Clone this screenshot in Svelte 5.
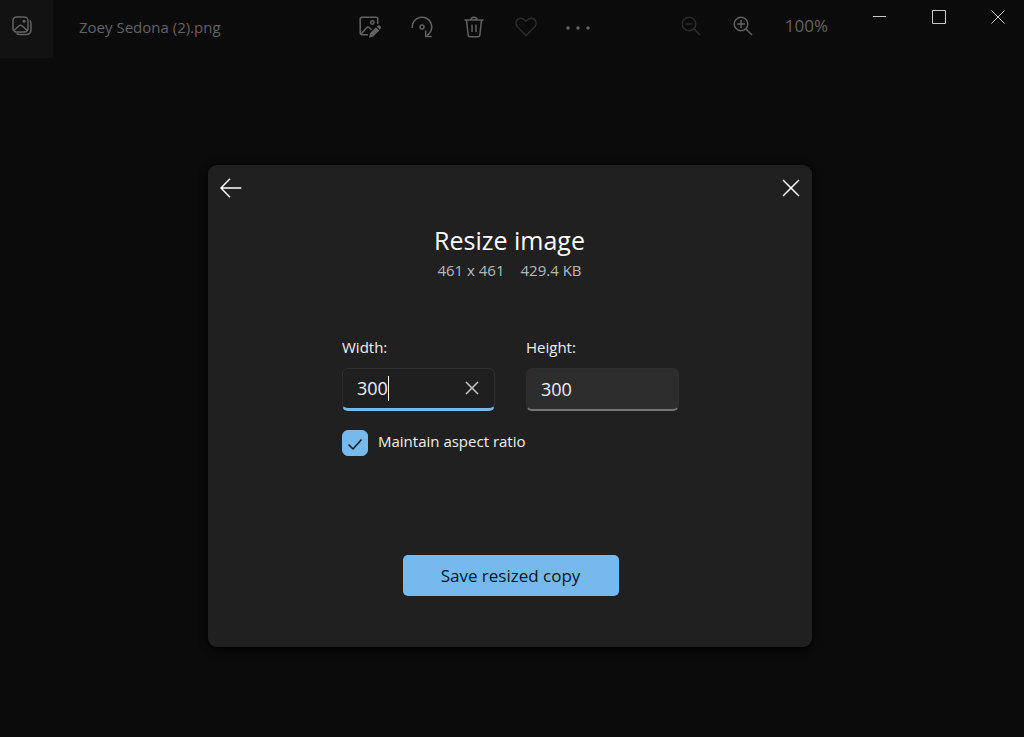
<script lang="ts">
  const fileName = "Zoey Sedona (2).png";
  const original = { width: 461, height: 461, size: "429.4 KB" };

  let width = $state("300");
  let height = $state("300");
  let keepRatio = $state(true);

  const ratio = original.width / original.height;

  function onWidthInput() {
    if (keepRatio && width) height = String(Math.round(Number(width) / ratio));
  }

  function onHeightInput() {
    if (keepRatio && height) width = String(Math.round(Number(height) * ratio));
  }
</script>

<div class="window">
  <header class="title-bar">
    <button class="gallery" aria-label="All photos">
      <svg width="22" height="22" viewBox="0 0 22 22">
        <rect x="2" y="2" width="15" height="15" rx="3.5" />
        <path d="M3 15.5 L8 10.8 Q9.5 9.6 11 10.8 L16 15.5" />
        <path d="M18.8 5.5 Q20 6.5 20 8.5 V14.5 Q20 19.5 15 19.5 H9 Q6.5 19.5 5.5 18.5" />
        <circle class="solid" cx="13" cy="6.3" r="1.5" />
      </svg>
    </button>
    <span class="file-name">{fileName}</span>

    <nav class="tools">
      <button aria-label="Edit image">
        <svg width="22" height="22" viewBox="0 0 22 22">
          <path d="M9 18.7 H3 Q1.2 18.7 1.2 17 V3 Q1.2 1.2 3 1.2 H17 Q18.8 1.2 18.8 3 V8" />
          <path d="M2 18 L8 11.5 Q9 10.7 10 11.5 L12.5 13.8" />
          <circle cx="13.3" cy="6.5" r="1.7" />
          <path class="solid" d="M10 21.8 L11 17.2 L17 11.2 L20.3 14.5 L14.2 20.6 Z M17.8 10.5 L19 9.5 Q20.2 8.8 21.4 10.1 Q22.6 11.7 21.6 12.7 L20.8 13.6 Z" />
        </svg>
      </button>
      <button aria-label="Rotate">
        <svg width="22" height="22" viewBox="0 0 22 22">
          <path d="M1.2 12 A9.8 9.8 0 1 1 15.8 19.5" />
          <path d="M14.7 14.5 V20.5 H20.7" />
          <circle cx="11" cy="11" r="2" />
        </svg>
      </button>
      <button aria-label="Delete">
        <svg width="22" height="22" viewBox="0 0 22 22">
          <path d="M1.5 4 H20.5 M8 4 Q8 1.2 11 1.2 Q14 1.2 14 4" />
          <path d="M3.5 4 L5.2 19.3 Q5.4 20.8 7 20.8 H15 Q16.6 20.8 16.8 19.3 L18.5 4" />
          <path d="M9 8.5 V16 M13 8.5 V16" />
        </svg>
      </button>
      <button class="faded" aria-label="Add to favorites">
        <svg width="22" height="22" viewBox="0 0 22 22">
          <path d="M11 19.5 L2.5 11 C-0.5 7.5 1.2 2.2 5.8 2.2 C8.4 2.2 9.6 3.6 11 5.2 C12.4 3.6 13.6 2.2 16.2 2.2 C20.8 2.2 22.5 7.5 19.5 11 Z" />
        </svg>
      </button>
      <button aria-label="See more">
        <svg width="26" height="22" viewBox="0 0 26 22">
          <circle class="solid" cx="3" cy="12" r="1.8" />
          <circle class="solid" cx="13" cy="12" r="1.8" />
          <circle class="solid" cx="23" cy="12" r="1.8" />
        </svg>
      </button>
    </nav>

    <div class="zoom">
      <button class="faded" aria-label="Zoom out">
        <svg width="20" height="20" viewBox="0 0 20 20">
          <circle cx="8" cy="8" r="6.8" />
          <path d="M13 13 L19 19 M4.5 8 H11.5" />
        </svg>
      </button>
      <button aria-label="Zoom in">
        <svg width="20" height="20" viewBox="0 0 20 20">
          <circle cx="8" cy="8" r="6.8" />
          <path d="M13 13 L19 19 M4 8 H12 M8 4 V12" />
        </svg>
      </button>
      <span class="zoom-level">100%</span>
    </div>

    <div class="window-controls">
      <button aria-label="Minimize">
        <svg width="14" height="14" viewBox="0 0 14 14"><path d="M0 6.5 H13" /></svg>
      </button>
      <button aria-label="Maximize">
        <svg width="14" height="14" viewBox="0 0 14 14"><path d="M0.5 0.5 H13.5 V13.5 H0.5 Z" /></svg>
      </button>
      <button aria-label="Close window">
        <svg width="14" height="14" viewBox="0 0 14 14"><path d="M0.5 0.5 L13.5 13.5 M13.5 0.5 L0.5 13.5" /></svg>
      </button>
    </div>
  </header>

  <main class="stage">
    <div class="dialog" role="dialog" aria-labelledby="dialog-title">
      <div class="dialog-nav">
        <button aria-label="Back">
          <svg width="22" height="20" viewBox="0 0 22 20">
            <path d="M21.3 10 H1.2 M10 0.8 L1 10 L10 19.2" />
          </svg>
        </button>
        <button aria-label="Close">
          <svg width="18" height="18" viewBox="0 0 18 18">
            <path d="M1 1 L17 17 M17 1 L1 17" />
          </svg>
        </button>
      </div>

      <h1 id="dialog-title">Resize image</h1>
      <p class="details">
        <span>{original.width} x {original.height}</span>
        <span>{original.size}</span>
      </p>

      <form onsubmit={(e) => e.preventDefault()}>
        <div class="fields">
          <div class="field">
            <label for="width">Width:</label>
            <div class="box active">
              <input id="width" type="text" size="3" bind:value={width} oninput={onWidthInput} />
              <span class="caret"></span>
              <button type="button" aria-label="Clear width" onclick={() => (width = "")}>
                <svg width="14" height="14" viewBox="0 0 14 14">
                  <path d="M1 1 L13 13 M13 1 L1 13" />
                </svg>
              </button>
            </div>
          </div>
          <div class="field">
            <label for="height">Height:</label>
            <div class="box">
              <input id="height" type="text" size="3" bind:value={height} oninput={onHeightInput} />
            </div>
          </div>
        </div>

        <div class="ratio">
          <input id="ratio" type="checkbox" bind:checked={keepRatio} />
          <svg width="16" height="14" viewBox="0 0 16 14">
            <path d="M1.5 7.5 L6 12 L14.5 2.5" />
          </svg>
          <label for="ratio">Maintain aspect ratio</label>
        </div>

        <button class="save" type="submit">Save resized copy</button>
      </form>
    </div>
  </main>
</div>

<style>
  :global(body) {
    margin: 0;
    background: #0b0b0b;
  }

  .window {
    min-height: 100vh;
    display: flex;
    flex-direction: column;
    background: #0b0b0b;
    color: #ffffff;
    font-family: "Segoe UI", "Open Sans", "Noto Sans", sans-serif;
  }

  button {
    display: flex;
    align-items: center;
    justify-content: center;
    padding: 0;
    border: none;
    background: none;
    color: inherit;
    font: inherit;
  }

  svg {
    fill: none;
    stroke: currentColor;
    stroke-width: 1.5;
    stroke-linejoin: round;
    overflow: visible;
  }

  .solid {
    fill: currentColor;
    stroke: none;
  }

  .title-bar {
    display: flex;
    height: 58px;
    color: #626262;
  }

  .gallery {
    width: 53px;
    padding: 0 10px 6px 0;
    background: #121212;
  }

  .file-name {
    flex: 1;
    padding: 16px 0 0 26px;
    font-size: 15px;
    line-height: 22px;
    white-space: nowrap;
  }

  .tools,
  .zoom {
    display: flex;
    height: 54px;
  }

  .tools button,
  .zoom button {
    width: 52px;
  }

  .tools {
    margin-right: 61px;
  }

  .zoom {
    height: 52px;
    align-items: center;
    margin-right: 26px;
  }

  .zoom-level {
    padding-left: 16px;
    font-size: 17px;
    line-height: 22px;
  }

  .faded {
    color: #2b2b2b;
  }

  .window-controls {
    display: flex;
    gap: 7px;
    height: 34px;
    color: #c8c8c8;
  }

  .window-controls button {
    width: 52px;
  }

  .window-controls svg {
    stroke-width: 1;
  }

  .stage {
    flex: 1;
    display: flex;
    align-items: center;
    justify-content: center;
    padding: 16px 5px 0 0;
  }

  .dialog {
    box-sizing: border-box;
    width: 100%;
    max-width: 604px;
    padding: 12px 12px 51px;
    border-radius: 9px;
    background: #202020;
    box-shadow: 0 2px 8px #000000;
  }

  .dialog-nav {
    display: flex;
    justify-content: space-between;
    height: 22px;
  }

  h1 {
    margin: 24px 0 0;
    font-size: 25px;
    font-weight: 400;
    line-height: 34px;
    text-align: center;
  }

  .details {
    display: flex;
    justify-content: center;
    gap: 16px;
    margin: 2px 0 0;
    color: #b8b8b8;
    font-size: 15px;
    line-height: 22px;
  }

  form {
    display: flex;
    flex-direction: column;
    width: 337px;
    margin: 55px auto 0;
    padding-left: 2px;
  }

  .fields {
    display: grid;
    grid-template-columns: 1fr 1fr;
    gap: 31px;
  }

  label {
    color: #f0f0f0;
    font-size: 15px;
    line-height: 22px;
  }

  .field {
    display: flex;
    flex-direction: column;
    gap: 10px;
  }

  .box {
    box-sizing: border-box;
    display: flex;
    align-items: center;
    height: 43px;
    padding: 0 14px;
    border: 1px solid #2f2f2f;
    border-bottom: 2px solid #757575;
    border-radius: 6px;
    background: #2d2d2d;
  }

  .box.active {
    border-bottom: 3px solid #76b9ed;
    background: #1f1f1f;
  }

  .box input {
    width: 100%;
    min-width: 0;
    padding: 0;
    border: none;
    outline: none;
    background: none;
    color: #f0f0f0;
    font: inherit;
    font-size: 18px;
  }

  .box.active input {
    width: auto;
    field-sizing: content;
    caret-color: transparent;
  }

  .caret {
    width: 1px;
    height: 25px;
    background: #ffffff;
  }

  .box button {
    width: 16px;
    margin-left: auto;
    color: #c8c8c8;
  }

  .ratio {
    display: flex;
    align-items: flex-start;
    margin-top: 19px;
  }

  .ratio input {
    appearance: none;
    width: 26px;
    height: 26px;
    margin: 0;
    border: 1px solid #76b9ed;
    border-radius: 6px;
  }

  .ratio input:checked {
    background: #76b9ed;
  }

  .ratio svg {
    margin: 7px 15px 0 -21px;
    color: #101c26;
    pointer-events: none;
  }

  .save {
    align-self: center;
    width: 216px;
    height: 41px;
    margin-top: 99px;
    border-radius: 5px;
    background: #76b9ed;
    color: #0b1620;
    font-size: 17px;
  }
</style>
